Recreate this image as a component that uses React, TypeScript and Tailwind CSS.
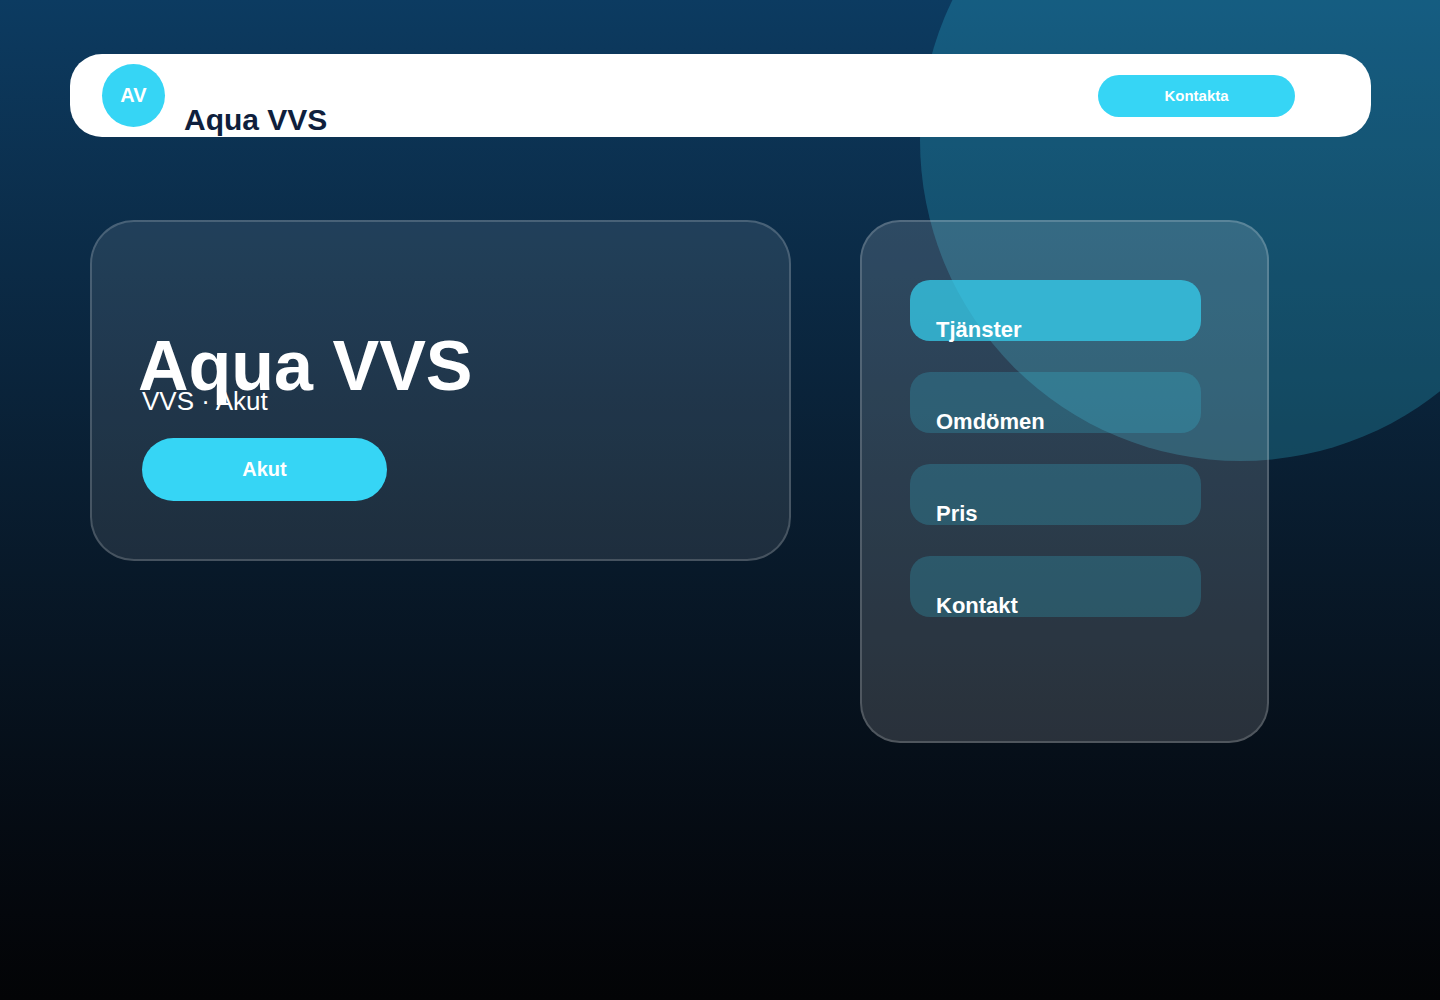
const links = [
  { label: "Tjänster", active: true },
  { label: "Omdömen", active: false },
  { label: "Pris", active: false },
  { label: "Kontakt", active: false },
];

export default function App() {
  return (
    <div className="relative isolate min-h-screen overflow-hidden bg-linear-to-b from-[#0c3b61] to-[#030406] px-[70px] pt-[54px] pb-16 font-['Liberation_Sans',Arial,sans-serif] text-white">
      <div className="absolute -top-[180px] -right-[121px] -z-10 size-[641px] rounded-full bg-[#35d5f5]/22" />

      <header className="-mr-px flex h-[83px] items-center rounded-[32px] bg-white pr-[76px] pl-8">
        <div className="flex size-[63px] shrink-0 items-center justify-center rounded-full bg-[#36d5f5] pb-0.5 text-[20px] font-bold">
          AV
        </div>
        <p className="ml-[19px] self-end text-[30px] leading-[34px] font-bold whitespace-nowrap text-[#0f1f3d]">
          Aqua VVS
        </p>
        <button
          type="button"
          className="ml-auto h-[42px] w-[197px] rounded-full bg-[#36d5f5] pt-0.5 text-[15px] font-bold"
        >
          Kontakta
        </button>
      </header>

      <main className="mt-[83px] mr-[101px] ml-5 grid grid-cols-[701fr_409fr] items-start gap-[69px]">
        <section className="rounded-[44px] border-2 border-white/18 bg-white/9 px-[46px] pt-[120px] pb-[58px]">
          <h1 className="text-[70px] leading-[48px] font-bold whitespace-nowrap">Aqua VVS</h1>
          <div className="pl-1">
            <p className="text-[26px] leading-[22px]">VVS · Akut</p>
            <button
              type="button"
              className="mt-[26px] h-[63px] w-[245px] rounded-full bg-[#36d5f5] pb-0.5 text-[20px] font-bold"
            >
              Akut
            </button>
          </div>
        </section>

        <nav
          aria-label="Meny"
          className="rounded-[40px] border-2 border-white/18 bg-white/14 pt-[58px] pr-[66px] pb-[124px] pl-12"
        >
          <ul className="flex flex-col gap-[31px]">
            {links.map(({ label, active }) => (
              <li key={label}>
                <a
                  href="#"
                  className={`flex h-[61px] items-end rounded-[20px] pl-[26px] text-[22px] leading-[22px] font-bold ${
                    active ? "bg-[#36d5f5]/70" : "bg-[#36d5f5]/20"
                  }`}
                >
                  {label}
                </a>
              </li>
            ))}
          </ul>
        </nav>
      </main>
    </div>
  );
}
